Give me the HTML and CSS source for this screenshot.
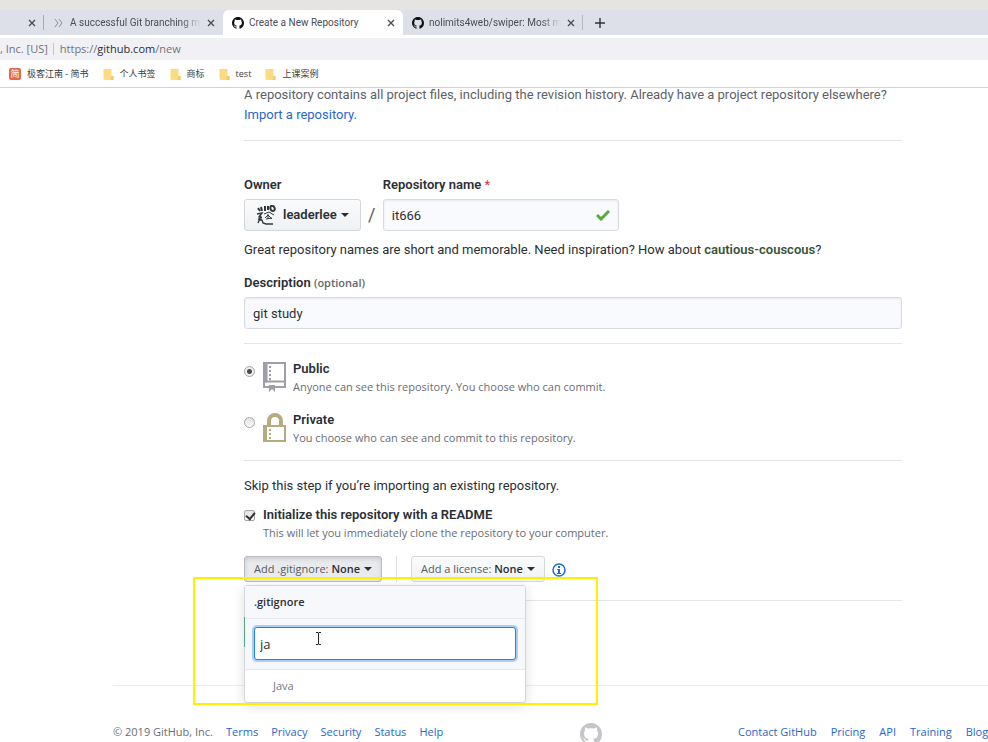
FILE: index.html
```html
<!DOCTYPE html>
<html lang="en">
<head>
<meta charset="utf-8">
<title>Create a New Repository</title>
<link rel="stylesheet" href="styles.css">
</head>
<body>
<svg class="defs" aria-hidden="true">
  <symbol id="octocat" viewBox="0 0 16 16"><path fill-rule="evenodd" d="M8 0C3.58 0 0 3.58 0 8c0 3.54 2.29 6.53 5.47 7.59.4.07.55-.17.55-.38 0-.19-.01-.82-.01-1.49-2.01.37-2.53-.49-2.69-.94-.09-.23-.48-.94-.82-1.13-.28-.15-.68-.52-.01-.53.63-.01 1.08.58 1.23.82.72 1.21 1.87.87 2.33.66.07-.52.28-.87.51-1.07-1.78-.2-3.64-.89-3.64-3.95 0-.87.31-1.59.82-2.15-.08-.2-.36-1.02.08-2.12 0 0 .67-.21 2.2.82.64-.18 1.32-.27 2-.27s1.36.09 2 .27c1.53-1.04 2.2-.82 2.2-.82.44 1.1.16 1.92.08 2.12.51.56.82 1.27.82 2.15 0 3.07-1.87 3.75-3.65 3.95.29.25.54.73.54 1.48 0 1.07-.01 1.93-.01 2.2 0 .21.15.46.55.38A8.01 8.01 0 0 0 16 8c0-4.42-3.58-8-8-8z"/></symbol>
  <symbol id="cross" viewBox="0 0 10 10"><path d="M2 2l6 6M8 2l-6 6" fill="none" stroke="#4b4d52" stroke-width="1.4"/></symbol>
  <symbol id="folder" viewBox="0 0 10 12"><path d="M0 1h8v7h2v4H1L0 11z" fill="#fbdc83"/><path d="M8 8h2v4H7z" fill="#f3cb66"/></symbol>
</svg>

<header class="browser">
  <div class="titlebar"></div>
  <div class="tabs">
    <div class="tab tab-cut"><button class="close" aria-label="Close"><svg><use href="#cross"/></svg></button></div>
    <div class="tab">
      <svg class="favicon" viewBox="0 0 12 12"><path d="M2 2l3 4-3 4M6 2l3 4-3 4" fill="none" stroke="#8b8d96"/></svg>
      <span class="tab-title">A successful Git branching mo</span>
      <button class="close" aria-label="Close"><svg><use href="#cross"/></svg></button>
    </div>
    <div class="tab tab-active">
      <svg class="favicon"><use href="#octocat"/></svg>
      <span class="tab-title">Create a New Repository</span>
      <button class="close" aria-label="Close"><svg><use href="#cross"/></svg></button>
    </div>
    <div class="tab tab-last">
      <svg class="favicon"><use href="#octocat"/></svg>
      <span class="tab-title">nolimits4web/swiper: Most m</span>
      <button class="close" aria-label="Close"><svg><use href="#cross"/></svg></button>
    </div>
    <button class="new-tab" aria-label="New tab"><svg viewBox="0 0 10 10"><path d="M5 0v10M0 5h10" stroke="#303238" stroke-width="1.4"/></svg></button>
  </div>
  <div class="address">
    <span class="issuer">, Inc. [US]</span>
    <span>https://<b>github.com</b>/new</span>
  </div>
  <nav class="bookmarks">
    <a href="#"><span class="jian">简</span>极客江南 - 简书</a>
    <a href="#"><svg class="folder"><use href="#folder"/></svg>个人书签</a>
    <a href="#"><svg class="folder"><use href="#folder"/></svg>商标</a>
    <a href="#"><svg class="folder"><use href="#folder"/></svg>test</a>
    <a href="#"><svg class="folder"><use href="#folder"/></svg>上课案例</a>
  </nav>
</header>

<main class="form">
  <p class="intro">A repository contains all project files, including the revision history. Already have a project repository elsewhere? <a href="#">Import a repository.</a></p>
  <hr>
  <div class="names">
    <div class="field">
      <label for="owner">Owner</label>
      <button class="owner" id="owner">
        <svg class="avatar" viewBox="0 0 20 20" fill="none" stroke="#33363b" stroke-width="1.4"><path d="M2 3l2 3M5 2l1 4M9 1v5M12 1v4M15 1c4-1 5 5 2 5s-3-4-2-5z" stroke-width="2"/><path d="M1 9l5-1-3 4 3 1M5 11l-3 7M2 14l4 1 1 3 3 1h7"/><path stroke-width="1" d="M8 9l5-2 5 3M9 13l3-3 4 4M10 14l6-1M12 9v5"/></svg>
        leaderlee<i class="caret"></i>
      </button>
    </div>
    <span class="slash">/</span>
    <div class="field">
      <label for="repo">Repository name <em>*</em></label>
      <div class="checked">
        <input class="text" id="repo" type="text" value="it666">
        <svg class="tick" viewBox="0 0 14 12"><path d="M1 6l4 4 8-8" fill="none" stroke="#5aa83a" stroke-width="3"/></svg>
      </div>
    </div>
  </div>
  <p class="hint">Great repository names are short and memorable. Need inspiration? How about <strong>cautious-couscous</strong>?</p>
  <div class="field">
    <label for="desc">Description <small>(optional)</small></label>
    <input class="text" id="desc" type="text" value="git study">
  </div>
  <hr>
  <div class="choices">
    <div class="choice">
      <input type="radio" name="visibility" id="public" checked>
      <svg class="big-icon" viewBox="0 0 24 30"><path d="M1 1h21v24H1z" fill="#fff" stroke="#9d9ea7" stroke-width="2"/><path d="M1 1h3v19H1zM1 19h21v1H1z" fill="#9d9ea7" stroke="#9d9ea7"/><path d="M7 4v14" stroke="#9d9ea7" stroke-width="2" stroke-dasharray="2 2"/><path d="M6 23h6v7l-3-3-3 3z" fill="#9d9ea7"/></svg>
      <div><label for="public">Public</label><p>Anyone can see this repository. You choose who can commit.</p></div>
    </div>
    <div class="choice">
      <input type="radio" name="visibility" id="private">
      <svg class="big-icon" viewBox="0 0 24 30"><path d="M6 13V8a6 6 0 0 1 12 0v5" fill="none" stroke="#b6aa80" stroke-width="4"/><path d="M1 13h21v15H1z" fill="#fff" stroke="#b6aa80" stroke-width="2"/><path d="M1 13h3v15H1z" fill="#b6aa80"/><path d="M7 16v10" stroke="#b6aa80" stroke-width="2" stroke-dasharray="2 2"/></svg>
      <div><label for="private">Private</label><p>You choose who can see and commit to this repository.</p></div>
    </div>
  </div>
  <hr>
  <p class="skip">Skip this step if you’re importing an existing repository.</p>
  <div class="choice readme">
    <input type="checkbox" id="readme" checked>
    <div><label for="readme">Initialize this repository with a README</label><p>This will let you immediately clone the repository to your computer.</p></div>
  </div>
  <div class="extras">
    <div class="menu-anchor">
      <button class="select open">Add .gitignore: <b>None</b><i class="caret"></i></button>
      <div class="menu">
        <label class="menu-title" for="filter">.gitignore</label>
        <div class="menu-filter"><input id="filter" type="text" value="ja"></div>
        <a class="menu-item" href="#">Java</a>
        <svg class="pointer" viewBox="0 0 7 13"><path d="M1 .5h2l.5.5.5-.5h2M3.500 1v11M1 12.500h2l.5-.5.5.5h2" fill="none" stroke="#222"/></svg>
      </div>
      <div class="highlight"></div>
    </div>
    <div class="license">
      <button class="select">Add a license: <b>None</b><i class="caret"></i></button>
    </div>
    <svg class="info" viewBox="0 0 14 14"><circle cx="7" cy="7" r="6" fill="none" stroke="#1f6bd0" stroke-width="1.500"/><path d="M6 3h2v2H6zM5 6h3v4h1v1H5v-1h1V7H5z" fill="#1f6bd0"/></svg>
  </div>
  <hr class="end">
</main>

<footer class="footer">
  <nav class="links"><span>© 2019 GitHub, Inc.</span><a href="#">Terms</a><a href="#">Privacy</a><a href="#">Security</a><a href="#">Status</a><a href="#">Help</a></nav>
  <svg class="mark"><use href="#octocat"/></svg>
  <nav class="links"><a href="#">Contact GitHub</a><a href="#">Pricing</a><a href="#">API</a><a href="#">Training</a><a href="#">Blog</a></nav>
</footer>
</body>
</html>
```
FILE: styles.css
```css
* { box-sizing: border-box; }
body {
  margin: 0;
  overflow: hidden;
  background: #fff;
  color: #2b2f35;
  font: 13px/20px Roboto, "Noto Sans CJK SC", sans-serif;
}
p { margin: 0; }
a { color: #2767cf; text-decoration: none; }
button, input { font: inherit; color: inherit; margin: 0; }
button { display: flex; align-items: center; padding: 0; border: 0; background: none; white-space: nowrap; }
svg { display: block; flex: none; }
b, strong, label { font-weight: 600; }
.defs { position: absolute; width: 0; height: 0; }
.address, .bookmarks, .choice p, small, .select, .menu, .footer { font-family: "Open Sans", "Noto Sans CJK SC", sans-serif; }

.titlebar { height: 10px; background: #e5e4e3; }
.tabs { display: flex; height: 25px; background: #dde0e9; }
.tab {
  display: flex;
  align-items: center;
  gap: 5px;
  width: 180px;
  padding: 0 7px 0 9px;
  color: #4b4d55;
  font-size: 10px;
}
.tab-cut { width: 44px; justify-content: flex-end; background: linear-gradient(#a9acb5, #a9acb5) right center / 1px 15px no-repeat; }
.tab:nth-child(2) { width: 179px; }
.tab-active { background: #fff; border-radius: 6px 6px 0 0; }
.tab-last { background: linear-gradient(#b5b8c1, #b5b8c1) right center / 1px 15px no-repeat; }
.tab-title { flex: 1; min-width: 0; white-space: nowrap; mask-image: linear-gradient(to right, #000 85%, transparent); }
.tab-active .tab-title { mask-image: none; }
.favicon { width: 12px; height: 12px; fill: #111; }
.close svg { width: 10px; height: 10px; }
.new-tab { padding-left: 12px; }
.new-tab svg { width: 10px; height: 10px; }
.address {
  display: flex;
  align-items: center;
  height: 25px;
  border-top: 3px solid #fff;
  background: #f1f1f5;
  color: #707279;
  font-size: 11px;
}
.address b { color: #2b2d33; font-weight: 400; }
.issuer { margin-right: 6px; padding-right: 5px; border-right: 1px solid #c4c5ca; line-height: 12px; }
.bookmarks {
  display: flex;
  align-items: center;
  gap: 14px;
  height: 28px;
  padding-left: 9px;
  border-bottom: 1px solid #d3d3d7;
  font-size: 9px;
}
.bookmarks a { display: flex; align-items: center; gap: 6px; color: #3b3d42; }
.folder { width: 11px; height: 12px; }
.jian { width: 12px; border-radius: 2px; background: #e8674b; color: #fff; line-height: 12px; text-align: center; }

.form { max-width: 902px; padding-left: 244px; }
.intro { margin-top: -3px; color: #5d6168; }
hr { height: 1px; margin: 14px 0 15px; border: 0; background: #e4e5e8; }
.intro + hr { margin: 15px 0 34px; }
.field { display: flex; flex-direction: column; gap: 4px; }
.names { display: flex; align-items: flex-end; }
.field em { color: #cf3a44; font-style: normal; font-weight: 400; }
small { color: #62666e; font-size: 11px; }
.owner {
  height: 32px;
  padding: 0 11px;
  border: 1px solid #d5d7db;
  border-radius: 3px;
  background: linear-gradient(#fafbfc, #eef1f4);
  font-weight: 600;
}
.avatar { width: 20px; height: 20px; margin-right: 7px; }
.caret { margin-left: 4px; border: 4px solid transparent; border-top-color: currentColor; border-bottom: 0; }
.slash { width: 22px; color: #565a61; font-size: 18px; line-height: 32px; text-align: center; }
.text {
  width: 100%;
  height: 32px;
  padding: 1px 8px 0;
  border: 1px solid #d9dbe1;
  border-radius: 3px;
  background: #f9fafd;
  box-shadow: inset 0 1px 2px #1b1f2313;
  outline: 0;
}
.checked { position: relative; width: 236px; }
.tick { position: absolute; top: 10px; right: 9px; width: 14px; height: 12px; }
.hint { margin: 9px 0 13px; }
.hint strong { color: #38553a; }

.choices { display: grid; gap: 15px; }
.choice { display: flex; align-items: flex-start; }
.choice label { display: block; }
.choice p { color: #6a6d74; font-size: 11px; line-height: 16px; }
.choice input {
  appearance: none;
  flex: none;
  width: 11px;
  height: 11px;
  margin: 7px 8px 0 0;
  border: 1px solid #a6a7aa;
  border-radius: 50%;
  background: linear-gradient(#e3e3e3, #f8f8f8);
}
.choice input[type="radio"]:checked { background: radial-gradient(circle, #4a4b4d 2px, #eee 3px); }
.big-icon { width: 24px; height: 30px; margin: 3px 6px 0 0; }
.skip { margin: 15px 0 9px; }
.choice input[type="checkbox"] {
  margin-top: 5px;
  border-radius: 2px;
}
.readme input::before {
  content: "";
  display: block;
  width: 7px;
  height: 4px;
  margin: 1px;
  border: solid #333;
  border-width: 0 0 2px 2px;
  transform: rotate(-50deg);
}

.extras { display: flex; margin-top: 15px; }
.menu-anchor { position: relative; }
.select {
  height: 26px;
  padding: 0 9px;
  border: 1px solid #d5d7db;
  border-radius: 3px;
  background: linear-gradient(#fafbfc, #f0f2f5);
  color: #565a61;
  font-size: 11px;
  white-space: pre;
}
.select b, .select .caret { color: #2b2f35; }
.select.open { border-color: #b9bbc0; background: #e8eaee; box-shadow: inset 0 2px 4px #1b1f2326; }
.license { margin-left: 14px; padding-left: 14px; border-left: 1px solid #dfe0e4; }
.info { width: 14px; height: 14px; margin: 7px 0 0 7px; }
.menu {
  position: absolute;
  z-index: 1;
  top: 29px;
  left: 0;
  width: 282px;
  border: 1px solid #d5d6da;
  border-radius: 3px;
  background: #fff;
  box-shadow: 0 3px 12px #1b1f2326;
  font-size: 11px;
}
.menu::before { content: ""; position: absolute; top: 31px; left: -1px; width: 1px; height: 30px; background: #55a98a; }
.menu-title { display: block; padding: 6px 9px; background: #f7f8fb; }
.menu-filter { padding: 8px 9px 9px; border: solid #e6e8ec; border-width: 1px 0; background: #f7f8fb; }
.menu-filter input {
  display: block;
  width: 100%;
  height: 33px;
  padding: 0 5px;
  border: 1px solid #2b7de0;
  border-radius: 3px;
  background: #fff;
  box-shadow: 0 0 0 2px #a9cef8;
  font-size: 13px;
  outline: 0;
}
.menu-item { display: block; padding: 6px 28px; color: #73767d; }
.pointer { position: absolute; top: 46px; left: 70px; width: 7px; height: 13px; }
.highlight { position: absolute; z-index: 2; top: 21px; left: -51px; width: 405px; height: 128px; border: 2px solid #fff000; pointer-events: none; }
.end { margin: 18px 0 0; }

.footer {
  display: flex;
  align-items: center;
  margin: 84px 0 0 113px;
  padding-top: 33px;
  border-top: 1px solid #ebecef;
  font-size: 11px;
  line-height: 22px;
  white-space: nowrap;
}
.links { display: flex; flex: none; gap: 14px; color: #6a6d74; }
.links:first-child { width: 467px; gap: 13px; }
.mark { width: 22px; height: 22px; margin: 4px 136px 0 0; fill: #c4c6c9; }
```
